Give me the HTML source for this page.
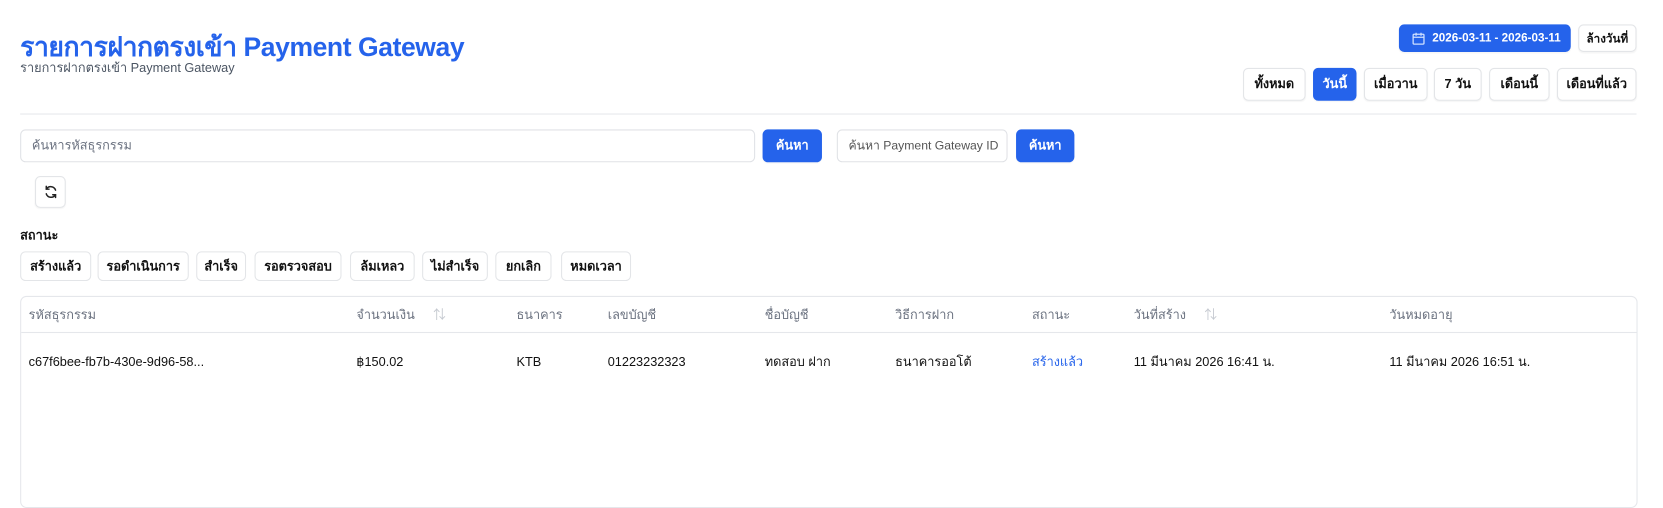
<!DOCTYPE html>
<html><head><meta charset="utf-8">
<style>
*{box-sizing:border-box;margin:0;padding:0}
html,body{width:1663px;height:441px;overflow:hidden;background:#fff}
#w{position:absolute;left:0;top:0;width:1568px;height:416px;transform:scale(1.0606);transform-origin:0 0;font-family:"Liberation Sans","Noto Sans CJK SC",sans-serif;color:#111;font-size:13px}
.abs{position:absolute}
.btn{position:absolute;border:1px solid #e3e5e8;border-radius:5px;background:#fff;display:flex;align-items:center;justify-content:center;font-size:12px;font-weight:bold;color:#111;box-shadow:0 1px 1px rgba(0,0,0,.04)}
.blue{background:#2563eb;border-color:#2563eb;color:#fff}
.inp{position:absolute;border:1px solid #e0e2e6;border-radius:5px;background:#fff;font-size:12px;color:#6b7280;display:flex;align-items:center;padding-left:10px;white-space:nowrap;overflow:hidden}
.sb{position:absolute;top:237px;height:28px;border:1px solid #e3e5e8;border-radius:5px;font-size:12px;display:flex;align-items:center;justify-content:center;color:#111;font-weight:600}
.th{position:absolute;top:289px;font-size:12px;color:#6b7280;line-height:16px}
.td{position:absolute;top:333px;font-size:12px;color:#111;line-height:16px}
</style></head><body><div id="w">
<div class="abs" style="left:19px;top:25px;font-size:25px;font-weight:bold;color:#2563eb;letter-spacing:-0.4px">รายการฝากตรงเข้า Payment Gateway</div>
<div class="abs" style="left:19px;top:55px;font-size:12px;color:#4b5563">รายการฝากตรงเข้า Payment Gateway</div>

<div class="btn blue" style="left:1319px;top:23px;width:162px;height:26px;font-size:11px">
<svg width="13" height="13" viewBox="0 0 14 14" style="position:absolute;left:11px;top:6px" fill="none" stroke="#cfe0ff" stroke-width="1.3"><rect x="1.5" y="2.5" width="11" height="10" rx="1"/><path d="M1.5 5.5h11M4.5 1v3M9.5 1v3"/></svg>
<span style="margin-left:22px">2026-03-11 - 2026-03-11</span></div>
<div class="btn" style="left:1488px;top:23px;width:55px;height:26px;font-size:11px">ล้างวันที่</div>

<div class="btn" style="left:1172px;top:64px;width:59px;height:31px">ทั้งหมด</div>
<div class="btn blue" style="left:1238px;top:64px;width:41px;height:31px">วันนี้</div>
<div class="btn" style="left:1286px;top:64px;width:60px;height:31px">เมื่อวาน</div>
<div class="btn" style="left:1352px;top:64px;width:45px;height:31px">7 วัน</div>
<div class="btn" style="left:1404px;top:64px;width:57px;height:31px">เดือนนี้</div>
<div class="btn" style="left:1468px;top:64px;width:75px;height:31px">เดือนที่แล้ว</div>

<div class="abs" style="left:19px;top:107px;width:1524px;height:1px;background:#e5e7eb"></div>

<div class="inp" style="left:19px;top:122px;width:693px;height:31px">ค้นหารหัสธุรกรรม</div>
<div class="btn blue" style="left:719px;top:122px;width:56px;height:31px">ค้นหา</div>
<div class="inp" style="left:789px;top:122px;width:161px;height:31px;color:#555;font-size:11.5px">ค้นหา Payment Gateway ID</div>
<div class="btn blue" style="left:958px;top:122px;width:55px;height:31px">ค้นหา</div>

<div class="btn" style="left:33px;top:166px;width:29px;height:30px">
<svg width="14" height="14" viewBox="0 0 16 16" fill="none" stroke="#222" stroke-width="1.6" stroke-linecap="round"><path d="M13 6A5.5 5.5 0 0 0 3.2 4.8M3 10a5.5 5.5 0 0 0 9.8 1.2"/><path d="M3 2v3h3M13 14v-3h-3"/></svg></div>

<div class="abs" style="left:19px;top:213px;font-size:12px;font-weight:bold">สถานะ</div>
<div class="sb" style="left:19px;width:67px">สร้างแล้ว</div>
<div class="sb" style="left:92px;width:86px">รอดำเนินการ</div>
<div class="sb" style="left:185px;width:47px">สำเร็จ</div>
<div class="sb" style="left:240px;width:82px">รอตรวจสอบ</div>
<div class="sb" style="left:330px;width:61px">ล้มเหลว</div>
<div class="sb" style="left:398px;width:62px">ไม่สำเร็จ</div>
<div class="sb" style="left:467px;width:53px">ยกเลิก</div>
<div class="sb" style="left:529px;width:66px">หมดเวลา</div>

<div class="abs" style="left:19px;top:279px;width:1525px;height:200px;border:1px solid #e5e7eb;border-radius:6px"></div>
<div class="abs" style="left:20px;top:313px;width:1523px;height:1px;background:#e5e7eb"></div>
<div class="th" style="left:27px">รหัสธุรกรรม</div>
<div class="th" style="left:336px">จำนวนเงิน <span style="color:#c5c9d0;margin-left:14px">⇅</span></div>
<div class="th" style="left:487px">ธนาคาร</div>
<div class="th" style="left:573px">เลขบัญชี</div>
<div class="th" style="left:721px">ชื่อบัญชี</div>
<div class="th" style="left:844px">วิธีการฝาก</div>
<div class="th" style="left:973px">สถานะ</div>
<div class="th" style="left:1069px">วันที่สร้าง <span style="color:#c5c9d0;margin-left:14px">⇅</span></div>
<div class="th" style="left:1310px">วันหมดอายุ</div>

<div class="td" style="left:27px">c67f6bee-fb7b-430e-9d96-58...</div>
<div class="td" style="left:336px">฿150.02</div>
<div class="td" style="left:487px">KTB</div>
<div class="td" style="left:573px">01223232323</div>
<div class="td" style="left:721px">ทดสอบ ฝาก</div>
<div class="td" style="left:844px">ธนาคารออโต้</div>
<div class="td" style="left:973px;color:#2563eb">สร้างแล้ว</div>
<div class="td" style="left:1069px">11 มีนาคม 2026 16:41 น.</div>
<div class="td" style="left:1310px">11 มีนาคม 2026 16:51 น.</div>
</div></body></html>
